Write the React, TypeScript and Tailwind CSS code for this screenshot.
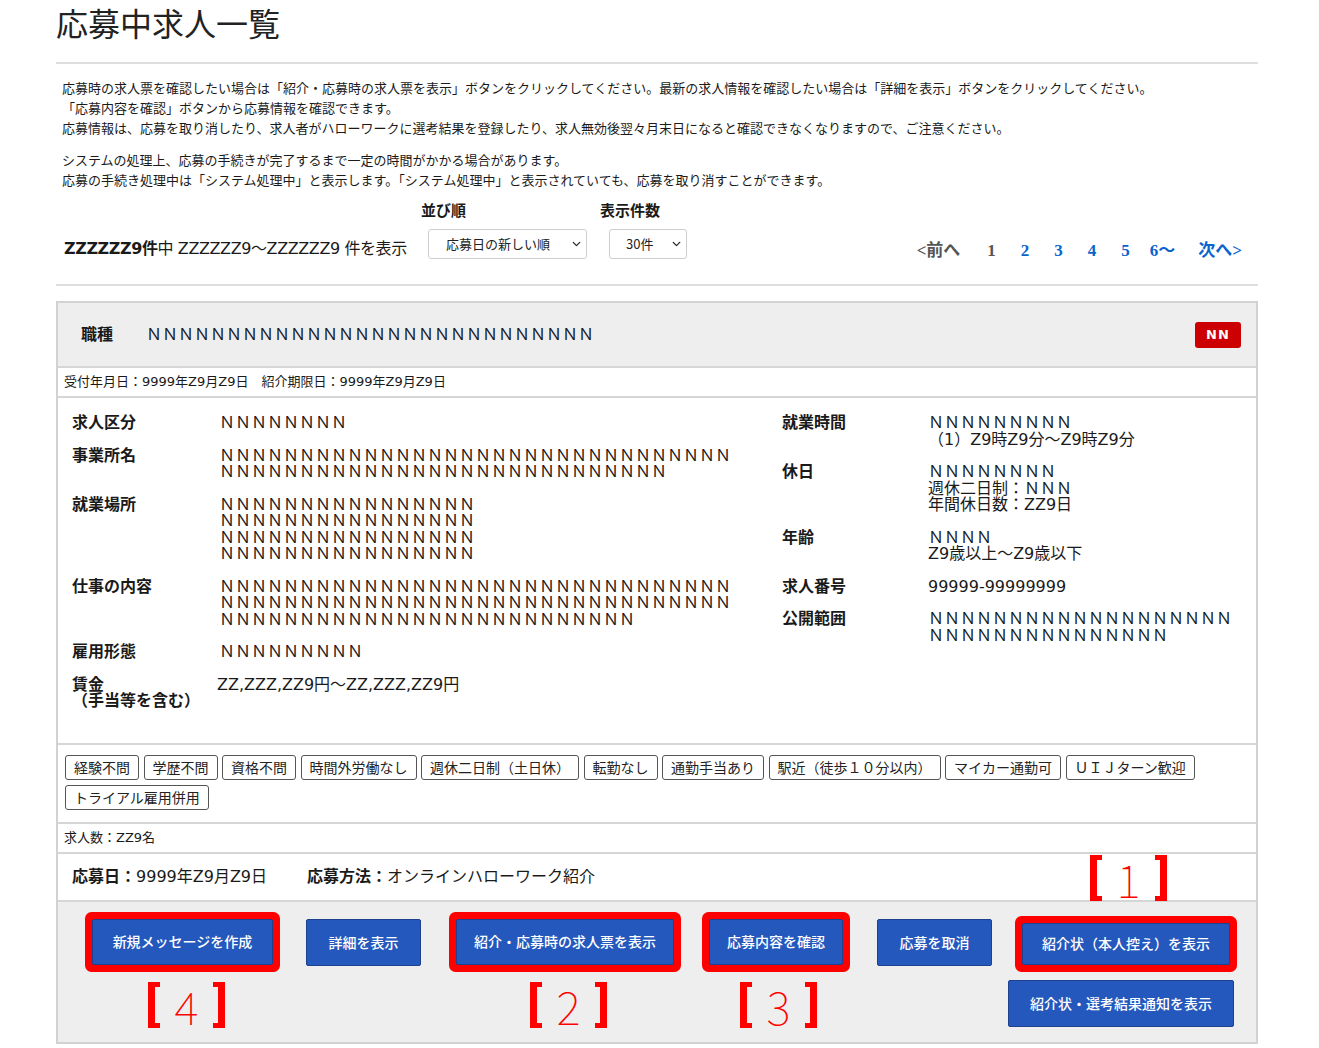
import { ChevronDown } from "lucide-react";

const N = (n: number) => "Ｎ".repeat(n);

const LEFT_ROWS: { label: React.ReactNode; lines: string[]; shift?: boolean }[] = [
  { label: "求人区分", lines: [N(8)] },
  { label: "事業所名", lines: [N(32), N(28)] },
  { label: "就業場所", lines: [N(16), N(16), N(16), N(16)] },
  { label: "仕事の内容", lines: [N(32), N(32), N(26)] },
  { label: "雇用形態", lines: [N(9)] },
  {
    label: (
      <>
        賃金
        <br />
        （手当等を含む）
      </>
    ),
    lines: ["ZZ,ZZZ,ZZ9円〜ZZ,ZZZ,ZZ9円"],
    shift: true,
  },
];

const RIGHT_ROWS: { label: string; lines: string[] }[] = [
  { label: "就業時間", lines: [N(9), "（1）Z9時Z9分〜Z9時Z9分"] },
  { label: "休日", lines: [N(8), "週休二日制：ＮＮＮ", "年間休日数：ZZ9日"] },
  { label: "年齢", lines: [N(4), "Z9歳以上〜Z9歳以下"] },
  { label: "求人番号", lines: ["99999-99999999"] },
  { label: "公開範囲", lines: [N(19), N(15)] },
];

const TAGS = [
  "経験不問",
  "学歴不問",
  "資格不問",
  "時間外労働なし",
  "週休二日制（土日休）",
  "転勤なし",
  "通勤手当あり",
  "駅近（徒歩１０分以内）",
  "マイカー通勤可",
  "ＵＩＪターン歓迎",
  "トライアル雇用併用",
];

function Mark({ n }: { n: string }) {
  return (
    <div className="flex h-[46px] w-[77px] items-center justify-between">
      <div className="h-[46px] w-[12px] border-y-[5px] border-l-[7px] border-[#ff0000]" />
      <span className="font-['Noto_Sans_CJK_JP',sans-serif] text-[46px] font-thin leading-none text-[#ff0000]">
        {n}
      </span>
      <div className="h-[46px] w-[12px] border-y-[5px] border-r-[7px] border-[#ff0000]" />
    </div>
  );
}

function Btn({
  children,
  className,
  marked,
}: {
  children: React.ReactNode;
  className?: string;
  marked?: boolean;
}) {
  return (
    <button
      type="button"
      className={`flex items-center justify-center rounded-[2px] border border-[#1d418f] bg-[#2558bd] font-['Noto_Sans_CJK_JP',sans-serif] text-[14px] font-medium text-white ${
        marked ? "shadow-[0_0_0_7px_#ff0000]" : ""
      } ${className ?? ""}`}
    >
      {children}
    </button>
  );
}

export default function App() {
  return (
    <div className="min-h-[1048px] bg-white font-['DejaVu_Sans','Noto_Sans_CJK_JP',sans-serif] text-[#1a1a1a]">
      <div className="ml-[56px] w-[1202px] pt-[2px]">
        <h1 className="font-['Noto_Sans_CJK_JP',sans-serif] text-[32px] font-normal leading-[40px] text-[#222]">
          応募中求人一覧
        </h1>
        <div className="mt-[20px] h-[2px] bg-[#dedede]" />

        <div className="mt-[14px] pl-[6px] font-['Noto_Sans_CJK_JP',sans-serif] text-[13px] leading-[20px]">
          <p>
            応募時の求人票を確認したい場合は「紹介・応募時の求人票を表示」ボタンをクリックしてください。最新の求人情報を確認したい場合は「詳細を表示」ボタンをクリックしてください。
          </p>
          <p>「応募内容を確認」ボタンから応募情報を確認できます。</p>
          <p>
            応募情報は、応募を取り消したり、求人者がハローワークに選考結果を登録したり、求人無効後翌々月末日になると確認できなくなりますので、ご注意ください。
          </p>
          <p className="mt-[12px]">システムの処理上、応募の手続きが完了するまで一定の時間がかかる場合があります。</p>
          <p>
            応募の手続き処理中は「システム処理中」と表示します。「システム処理中」と表示されていても、応募を取り消すことができます。
          </p>
        </div>

        {/* sort / count / pager */}
        <div className="mt-[10px] flex items-end pl-[8px]">
          <div className="w-[357px] whitespace-nowrap text-[16px] leading-[20px] tracking-[-0.4px]">
            <span className="font-bold">ZZZZZZ9件</span>中 ZZZZZZ9〜ZZZZZZ9 件を表示
          </div>
          <div className="flex flex-col">
            <span className="font-['Noto_Sans_CJK_JP',sans-serif] text-[15px] font-bold leading-[20px]">並び順</span>
            <div className="relative ml-[7px] mt-[9px] h-[30px] w-[159px]">
              <select className="h-full w-full appearance-none rounded-[3px] border border-[#cfcfcf] bg-white pl-[17px] font-['Noto_Sans_CJK_JP',sans-serif] text-[13px] text-[#222]">
                <option>応募日の新しい順</option>
              </select>
              <ChevronDown
                size={13}
                strokeWidth={2.6}
                className="pointer-events-none absolute right-[4px] top-1/2 -translate-y-1/2 text-[#333]"
              />
            </div>
          </div>
          <div className="ml-[13px] flex flex-col">
            <span className="font-['Noto_Sans_CJK_JP',sans-serif] text-[15px] font-bold leading-[20px]">表示件数</span>
            <div className="relative ml-[9px] mt-[9px] h-[30px] w-[78px]">
              <select className="h-full w-full appearance-none rounded-[3px] border border-[#cfcfcf] bg-white pl-[16px] font-['Noto_Sans_CJK_JP',sans-serif] text-[13px] text-[#222]">
                <option>30件</option>
              </select>
              <ChevronDown
                size={13}
                strokeWidth={2.6}
                className="pointer-events-none absolute right-[4px] top-1/2 -translate-y-1/2 text-[#333]"
              />
            </div>
          </div>
          <div className="mb-[-2px] ml-auto flex items-center pr-[16px] font-['Liberation_Serif','Noto_Sans_CJK_JP',serif] text-[17px] font-bold leading-[20px]">
            <span className="text-[#555]">&lt;前へ</span>
            <span className="ml-[27px] text-[#555]">1</span>
            <a className="ml-[25px] text-[#0b63ce]">2</a>
            <a className="ml-[25px] text-[#0b63ce]">3</a>
            <a className="ml-[25px] text-[#0b63ce]">4</a>
            <a className="ml-[25px] text-[#0b63ce]">5</a>
            <a className="ml-[20px] text-[#0b63ce]">6〜</a>
            <a className="ml-[23px] text-[#0b63ce]">次へ&gt;</a>
          </div>
        </div>

        <div className="mt-[25px] h-[2px] bg-[#dedede]" />

        {/* card */}
        <div className="mt-[15px] border-2 border-[#d2d2d2]">
          <div className="flex h-[65px] items-center border-b-2 border-[#d6d6d6] bg-[#eeeeee] pl-[23px] pr-[15px]">
            <span className="text-[16px] font-bold">職種</span>
            <span className="ml-[33px] text-[16px]">{N(28)}</span>
            <span className="ml-auto flex h-[26px] w-[46px] items-center justify-center rounded-[3px] bg-[#cc0000] text-[13px] font-bold tracking-[1px] text-white">
              NN
            </span>
          </div>

          <div className="flex h-[30px] items-center border-b-2 border-[#d6d6d6] pl-[6px] text-[13px]">
            受付年月日：9999年Z9月Z9日　紹介期限日：9999年Z9月Z9日
          </div>

          <div className="grid grid-cols-[710px_1fr] border-b-2 border-[#d6d6d6] pb-[33px] pl-[14px] pt-[17px] text-[16px] leading-[16.5px]">
            <div className="flex flex-col gap-y-[16px]">
              {LEFT_ROWS.map((r, i) => (
                <div key={i} className="grid grid-cols-[147px_1fr]">
                  <div className="font-bold">{r.label}</div>
                  <div className={r.shift ? "-ml-[2px]" : ""}>
                    {r.lines.map((l, j) => (
                      <div key={j}>{l}</div>
                    ))}
                  </div>
                </div>
              ))}
            </div>
            <div className="flex flex-col gap-y-[16px]">
              {RIGHT_ROWS.map((r, i) => (
                <div key={i} className="grid grid-cols-[146px_1fr]">
                  <div className="font-bold">{r.label}</div>
                  <div>
                    {r.lines.map((l, j) => (
                      <div key={j}>{l}</div>
                    ))}
                  </div>
                </div>
              ))}
            </div>
          </div>

          <div className="flex flex-wrap gap-x-[4.5px] gap-y-[5px] border-b-2 border-[#d6d6d6] pb-[12px] pl-[7px] pr-[40px] pt-[10px]">
            {TAGS.map((t) => (
              <span
                key={t}
                className="rounded-[3px] border border-[#555] px-[8px] font-['Noto_Sans_CJK_JP',sans-serif] text-[14px] leading-[23px] text-[#222]"
              >
                {t}
              </span>
            ))}
          </div>

          <div className="flex h-[30px] items-center border-b-2 border-[#d6d6d6] pl-[6px] text-[13px]">
            求人数：ZZ9名
          </div>

          <div className="flex h-[48px] items-center border-b-2 border-[#d6d6d6] pl-[14px] text-[16px]">
            <span className="font-bold">応募日：</span>
            <span>9999年Z9月Z9日</span>
            <span className="ml-[40px] font-bold">応募方法：</span>
            <span>オンラインハローワーク紹介</span>
          </div>

          {/* buttons */}
          <div className="flex items-start bg-[#eeeeee] pb-[15px] pl-[34px] pt-[17px]">
            <div className="relative">
              <Btn marked className="h-[46px] w-[181px]">
                新規メッセージを作成
              </Btn>
              <div className="absolute left-[56px] top-[63px]">
                <Mark n="4" />
              </div>
            </div>
            <Btn className="ml-[33px] h-[47px] w-[115px]">詳細を表示</Btn>
            <div className="relative ml-[35px]">
              <Btn marked className="h-[46px] w-[218px]">
                紹介・応募時の求人票を表示
              </Btn>
              <div className="absolute left-[74px] top-[63px]">
                <Mark n="2" />
              </div>
            </div>
            <div className="relative ml-[35px]">
              <Btn marked className="h-[46px] w-[134px]">
                応募内容を確認
              </Btn>
              <div className="absolute left-[31px] top-[63px]">
                <Mark n="3" />
              </div>
            </div>
            <Btn className="ml-[34px] h-[47px] w-[115px]">応募を取消</Btn>
            <div className="ml-[16px] flex w-[226px] flex-col">
              <div className="relative ml-[14px] mt-[4px]">
                <Btn marked className="h-[42px] w-[208px]">
                  紹介状（本人控え）を表示
                </Btn>
                <div className="absolute left-[68px] top-[-68px]">
                  <Mark n="1" />
                </div>
              </div>
              <Btn className="mt-[15px] h-[47px] w-[226px]">紹介状・選考結果通知を表示</Btn>
            </div>
          </div>
        </div>
      </div>
    </div>
  );
}
